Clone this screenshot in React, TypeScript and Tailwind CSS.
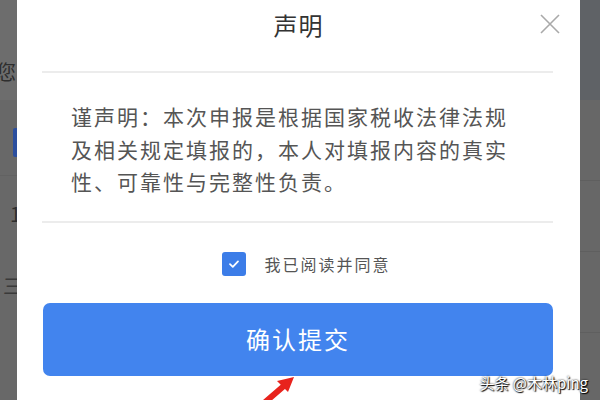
import React from "react";

const cjk = "font-['Noto_Sans_CJK_SC','Noto_Sans',sans-serif]";

function LeftStrip() {
  return (
    <div className="flex w-[17px] shrink-0 flex-col items-end overflow-hidden bg-[#686868]">
      <div className="flex h-[100px] w-full shrink-0 justify-end bg-[#6d6d6d] pt-[62px]">
        <span className="mr-[1px] text-[20px] leading-none text-[#2e2e2e]">您</span>
      </div>
      <div className="mt-[28px] h-[29px] w-[4px] rounded-l-[2px] bg-[#2c4f9e]" />
      <div className="mt-[18px] h-px w-full bg-[#626262]" />
      <span className="mr-[-4px] mt-[28px] text-[20px] leading-none text-[#2e2e2e]">1</span>
      <span className="mr-[-6px] mt-[52px] text-[20px] leading-none text-[#3a3a3a]">三</span>
    </div>
  );
}

function RightStrip() {
  return (
    <div className="flex w-[20px] shrink-0 flex-col bg-[#676767]">
      <div className="h-[100px] bg-[#5f6266]" />
      <div className="mt-[80px] h-px bg-[#5f5f5f]" />
      <div className="mt-[70px] h-px bg-[#5f5f5f]" />
      <div className="mt-[80px] h-px bg-[#5f5f5f]" />
    </div>
  );
}

export default function App() {
  return (
    <div className={`relative flex h-[400px] w-[600px] overflow-hidden ${cjk}`}>
      <LeftStrip />

      <div className="flex flex-1 flex-col bg-white">
        <div className="grid h-[71px] grid-cols-[1fr_auto_1fr] items-start px-[19px] pt-[10px]">
          <div />
          <div className="text-[24px] leading-[30px] tracking-[1px] text-[#333]">声明</div>
          <svg className="mt-[3px] justify-self-end" width="22" height="22" viewBox="0 0 22 22" fill="none">
            <path d="M2 2L20 20M20 2L2 20" stroke="#a9a9a9" strokeWidth="1.6" />
          </svg>
        </div>
        <div className="ml-[25px] mr-[27px] h-[2px] bg-[#ececec]" />

        <p className="mt-[27px] pl-[54px] text-[21px] leading-[32.5px] tracking-[2px] text-[#555]">
          谨声明：本次申报是根据国家税收法律法规
          <br />
          及相关规定填报的，本人对填报内容的真实
          <br />
          性、可靠性与完整性负责。
        </p>

        <div className="ml-[25px] mr-[27px] mt-[23px] h-[2px] bg-[#ececec]" />

        <div className="mt-[29px] flex items-center justify-center pl-[16px]">
          <div className="flex h-[24px] w-[24px] items-center justify-center rounded-[3px] bg-[#3c7de8]">
            <svg width="14" height="14" viewBox="0 0 14 14" fill="none">
              <path d="M3 7.2L5.8 9.8L11 4.4" stroke="white" strokeWidth="1.8" strokeLinecap="round" strokeLinejoin="round" />
            </svg>
          </div>
          <span className="ml-[18px] text-[16px] leading-[24px] tracking-[2px] text-[#555]">我已阅读并同意</span>
        </div>

        <button className="ml-[26px] mr-[27px] mt-[27px] flex h-[73px] items-center justify-center rounded-[7px] bg-[#4284ee]">
          <span className="text-[24px] tracking-[2px] text-white">确认提交</span>
        </button>
      </div>

      <RightStrip />

      <svg className="absolute left-[255px] top-[372px]" width="45" height="30" viewBox="0 0 45 30">
        <path d="M8 32L30 13" stroke="#e8231d" strokeWidth="6" strokeLinecap="round" />
        <path d="M39 5L22 9L33 20Z" fill="#e8231d" />
      </svg>

      <div className="absolute bottom-[10px] right-[12px] text-[15px] leading-none text-white [text-shadow:1px_1px_1px_#000,0_0_2px_#000]">
        头条 @木林ping
      </div>
    </div>
  );
}
